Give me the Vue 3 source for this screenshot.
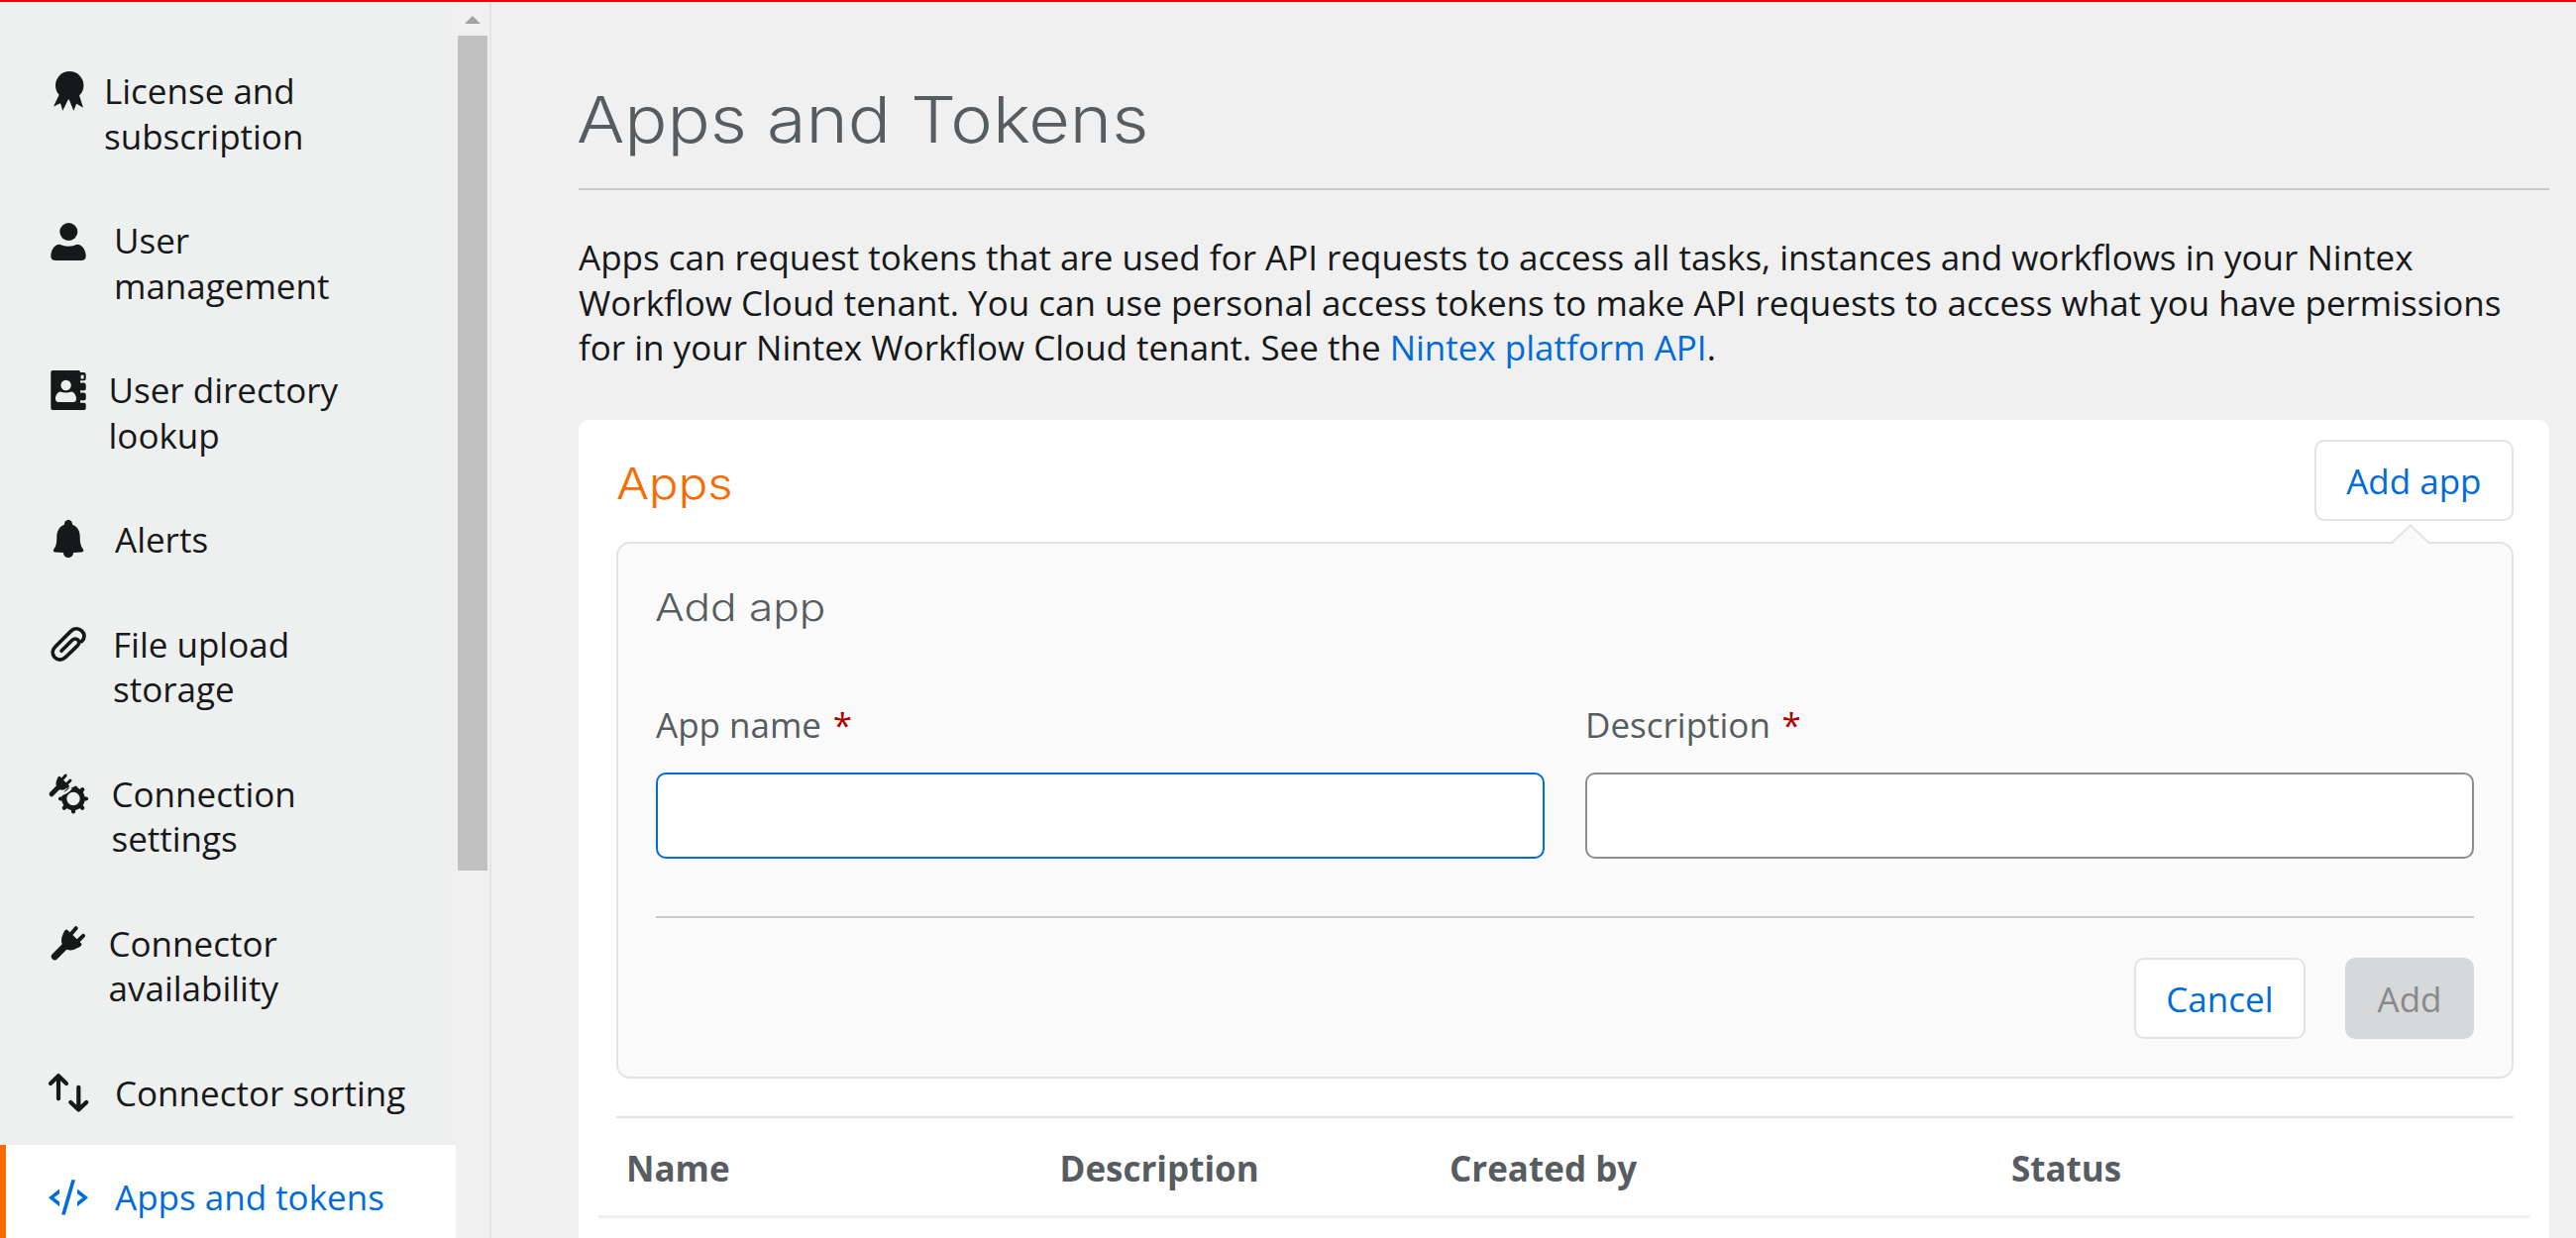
<script setup>
const navItems = [
  { icon: 'license', lines: ['License and', 'subscription'], indent: 105 },
  { icon: 'user', lines: ['User', 'management'], indent: 115 },
  { icon: 'directory', lines: ['User directory', 'lookup'], indent: 109.5 },
  { icon: 'bell', lines: ['Alerts'], indent: 116 },
  { icon: 'clip', lines: ['File upload', 'storage'], indent: 114 },
  { icon: 'plug-gear', lines: ['Connection', 'settings'], indent: 112.5 },
  { icon: 'plug', lines: ['Connector', 'availability'], indent: 109.5 },
  { icon: 'sort', lines: ['Connector sorting'], indent: 116 },
  { icon: 'code', lines: ['Apps and tokens'], indent: 116, active: true },
]

const columns = [
  { label: 'Name', width: 437.5 },
  { label: 'Description', width: 393.5 },
  { label: 'Created by', width: 567 },
  { label: 'Status', width: 400 },
]
</script>

<template>
  <div class="page">
    <aside class="sidebar">
      <nav class="nav">
        <a
          v-for="item in navItems"
          :key="item.icon"
          class="nav-item"
          :class="{ active: item.active }"
        >
          <svg class="nav-icon" viewBox="0 0 40 40" fill="currentColor">
            <template v-if="item.icon === 'license'">
              <circle cx="21.2" cy="17.2" r="14.2" />
              <path d="M11 26 5 38.5 12 35.3 14.3 42.7 20.3 30.5 25.3 42.7 28.2 35.8 35 39.7 30.6 26Z" />
            </template>
            <template v-else-if="item.icon === 'user'">
              <circle cx="20.3" cy="14" r="9" />
              <path d="M11 26.7Q20 30.6 29 26.7C34 26.7 37.7 33 37.7 38.5Q37.7 43 32.5 43H7.5Q2.3 43 2.3 38.5C2.3 33 6 26.7 11 26.7Z" />
            </template>
            <template v-else-if="item.icon === 'directory'">
              <path fill-rule="evenodd" d="M4.3 3H30.5Q32 3 32 5H36Q37.7 5.4 37.7 7V11.5Q37.7 13 36 13.2H32V15.6H36Q37.7 16 37.7 17.5V21.5Q37.7 23 36 23.2H32V25.6H36Q37.7 26 37.7 27.5V31.5Q37.7 33 36 33.2H32V35.7H36Q37.7 36 37.7 37.5V41Q37.7 43 35.7 43H4.3Q2.3 43 2.3 41V5Q2.3 3 4.3 3ZM32.6 7.7V11.6H35.6V7.7ZM17.6 12.8A5.2 5.2 0 1 0 17.6 23.2A5.2 5.2 0 1 0 17.6 12.8ZM12 24.5C9 24.5 7 28.5 7 31.5Q7 35 10.5 35H24.5Q28 35 28 31.5C28 28.5 26 24.5 23 24.5Q17.5 26.7 12 24.5Z" />
            </template>
            <template v-else-if="item.icon === 'bell'">
              <path d="M16 7.8C15.5 1.4 24.5 1.4 24 7.8C29 9.5 31.6 14 31.7 19.5C31.7 26 32.5 29.5 34.9 32.5Q36.2 35 33.5 35.4L25 36C25 42.7 15 42.7 15 36L6.5 35.4Q4 35 5.3 32.5C7.8 29.5 8.3 26 8.3 19.5C8.5 14 11 9.5 16 7.8Z" />
            </template>
            <template v-else-if="item.icon === 'clip'">
              <path class="stroke" stroke-width="3.7" d="M33.6 19.6C37 16 36.6 12 33.6 9.2C30.2 6 25.7 6.1 22.2 9.6L7 24.8C3.5 28.3 3.3 32.8 6.2 35.8C9.2 38.9 13.7 39 17.2 35.5L28.8 24.4C31.3 22 31.3 19.6 29.7 18.1C27.9 16.4 25.4 16.7 23.4 18.7L13 29.2" />
            </template>
            <template v-else-if="item.icon === 'plug-gear'">
              <g transform="translate(-1.1 -.8) scale(.66)">
                <path class="stroke" stroke-width="7.4" d="M6.3 35.8 18 24" />
                <path d="M18.7 8.5 33.5 23Q33 26 29.3 27Q24 31 18 28.5Q12 25 13.2 17Q14.5 13 15.5 11Q16 8.5 18.7 8.5Z" />
                <path class="stroke" stroke-width="4.4" d="M22.7 13 27.7 7.2M29.3 20.5 35 14.8" />
              </g>
              <circle class="stroke" cx="25" cy="27.5" r="9.2" stroke-width="5" />
              <path class="stroke" stroke-width="4.2" d="M36 27.5H38M32.6 19.9 34.2 18.3M32.6 35.1 34.2 36.7M25 38.5V40.5M17.4 35.1 15.8 36.7M14 27.5H12M26.5 17.5 27.3 16.8" />
              <path class="cut" d="M11 23.2Q18.5 22.5 23 16.2" />
            </template>
            <template v-else-if="item.icon === 'plug'">
              <path class="stroke" stroke-width="7" d="M6.3 35.8 18 24" />
              <path d="M18.7 8.5 33.5 23Q33 26 29.3 27Q24 31 18 28.5Q12 25 13.2 17Q14.5 13 15.5 11Q16 8.5 18.7 8.5Z" />
              <path class="stroke" stroke-width="4" d="M22.7 13 27.7 7.2M29.3 20.5 35 14.8" />
            </template>
            <template v-else-if="item.icon === 'sort'">
              <path class="stroke" stroke-width="4.2" d="M10 28.3V5.2M2 13 10 5.2 18 13M30.3 16.8V39.6M22.3 32 30.3 39.6 38.2 32" />
            </template>
            <template v-else>
              <path d="M11 14.6V19.3L5.5 23.3 11 27.4V32.2L0 23.3ZM29 14.6V19.3L34.5 23.3 29 27.4V32.2L40 23.3ZM23.3 5.2H27L16.8 40.6H13Z" />
            </template>
          </svg>
          <span class="nav-label" :style="{ marginLeft: item.indent - 89 + 'px' }">
            <span v-for="line in item.lines" :key="line" class="nav-line">{{ line }}</span>
          </span>
        </a>
      </nav>
      <div class="scrollbar">
        <svg class="scroll-up" viewBox="0 0 16 8"><path d="M0 8 8 0 16 8Z" /></svg>
        <div class="thumb"></div>
      </div>
    </aside>

    <main class="main">
      <h1 class="title"><span>Apps and Tokens</span></h1>
      <p class="intro">
        Apps can request tokens that are used for API requests to access all tasks, instances and workflows in your Nintex<br />
        Workflow Cloud tenant. You can use personal access tokens to make API requests to access what you have permissions<br />
        for in your Nintex Workflow Cloud tenant. See the <a class="link">Nintex platform API</a>.
      </p>

      <section class="card">
        <header class="card-head">
          <h2 class="card-title"><span>Apps</span></h2>
          <button class="btn">Add app</button>
        </header>

        <div class="panel">
          <svg class="pointer" viewBox="0 0 38 20">
            <path class="pointer-fill" d="M1 20 19 1 37 20Z" />
            <path class="pointer-line" d="M.5 18.5 19 1.5 37 18.5" />
          </svg>
          <h3 class="panel-title"><span>Add app</span></h3>
          <div class="fields">
            <label class="field">
              <span class="field-label">App name <b class="req">*</b></span>
              <input class="input focused" type="text" />
            </label>
            <label class="field">
              <span class="field-label">Description <b class="req">*</b></span>
              <input class="input" type="text" />
            </label>
          </div>
          <div class="actions">
            <button class="btn">Cancel</button>
            <button class="btn disabled">Add</button>
          </div>
        </div>

        <div class="table-head">
          <span
            v-for="col in columns"
            :key="col.label"
            class="col"
            :style="{ width: col.width + 'px' }"
          >{{ col.label }}</span>
        </div>
        <div class="row-line"></div>
      </section>
    </main>
  </div>
</template>

<style>
body {
  margin: 0;
  overflow: hidden;
}
</style>

<style scoped>
* {
  box-sizing: border-box;
}
.page {
  display: flex;
  width: 2600px;
  height: 1250px;
  overflow: hidden;
  border-top: 2px solid #e80000;
  background: #f0f0f0;
  color: #161819;
  font: 400 35px/45.5px "Open Sans", sans-serif;
}
.sidebar {
  display: flex;
  flex: none;
  width: 496px;
  border-right: 2px solid #e3e4e4;
}
.nav {
  width: 460px;
  padding-top: 37px;
  background: #eef0ef;
}
.nav-item {
  display: flex;
  align-items: flex-start;
  padding: 30px 0 30px 49px;
}
.nav-item.active {
  padding-left: 43px;
  border-left: 6px solid #f96b00;
  background: #fff;
  color: #006bdb;
}
.nav-icon {
  flex: none;
  width: 40px;
  height: 40px;
  overflow: visible;
}
.stroke {
  fill: none;
  stroke: currentColor;
  stroke-linecap: round;
  stroke-linejoin: round;
}
.cut {
  fill: none;
  stroke: #eef0ef;
  stroke-width: 2.4;
}
.nav-line {
  display: block;
  white-space: nowrap;
}
.scrollbar {
  display: flex;
  flex-direction: column;
  align-items: center;
  width: 34px;
  background: #f0f0f0;
}
.scroll-up {
  width: 16px;
  height: 8px;
  margin-top: 14px;
  fill: #a3a3a3;
}
.thumb {
  width: 30px;
  height: 843px;
  margin-top: 12px;
  background: #c1c1c1;
}
.main {
  flex: 1;
  padding: 78px 27px 0 88px;
}
h1,
h2,
h3,
p {
  margin: 0;
}
.title,
.card-title,
.panel-title {
  color: #565c60;
  font-family: Inter, sans-serif;
  font-weight: 350;
  white-space: nowrap;
}
.title span,
.card-title span,
.panel-title span {
  display: inline-block;
  transform-origin: 0 50%;
}
.title span {
  margin-left: -2px;
  transform: scaleX(1.105);
}
.card-title span {
  transform: scaleX(1.13);
}
.panel-title span {
  margin-left: -1.5px;
  transform: scaleX(1.145);
}
.title {
  height: 112px;
  border-bottom: 2px solid #c9caca;
  font-size: 65px;
  line-height: 82px;
}
.intro {
  margin-top: 45px;
  white-space: nowrap;
}
.link {
  color: #006bdb;
}
.card {
  height: 900px;
  margin-top: 50.5px;
  padding: 20px 36px 0 38px;
  border-radius: 10px;
  background: #fff;
}
.card-head {
  display: flex;
  align-items: center;
  justify-content: space-between;
  height: 82px;
}
.card-title {
  padding-top: 6px;
  color: #f96b00;
  font-size: 43.5px;
  line-height: 50px;
}
.btn {
  height: 82px;
  padding: 1px 30.5px 0;
  border: 2px solid #e2e3e3;
  border-radius: 10px;
  background: #fff;
  color: #006bdb;
  font: inherit;
}
.btn.disabled {
  border-color: #d7d8da;
  background: #d7d8da;
  color: #87898b;
}
.panel {
  position: relative;
  height: 542px;
  margin-top: 21px;
  padding: 39px 38px 0;
  border: 2px solid #e2e3e3;
  border-radius: 14px;
  background: #fafafa;
}
.pointer {
  position: absolute;
  top: -20px;
  right: 83px;
  width: 38px;
  height: 20px;
}
.pointer-fill {
  fill: #fafafa;
}
.pointer-line {
  fill: none;
  stroke: #e2e3e3;
  stroke-width: 2;
}
.panel-title {
  font-size: 38.5px;
  line-height: 50px;
}
.fields {
  display: flex;
  gap: 41px;
  margin-top: 70.7px;
  padding-bottom: 58px;
  border-bottom: 2px solid #c9caca;
}
.field {
  flex: 1;
}
.field:first-child {
  flex: 0 0 897px;
}
.field-label {
  display: block;
  color: #565c60;
}
.req {
  margin-left: 2.5px;
  color: #b00000;
  font-weight: 400;
}
.input {
  display: block;
  width: 100%;
  height: 87px;
  margin-top: 25.8px;
  border: 2px solid #8a8e93;
  border-radius: 10px;
  background: #fff;
  outline: none;
}
.input.focused {
  border-color: #006bdb;
}
.actions {
  display: flex;
  justify-content: flex-end;
  gap: 40px;
  margin-top: 40px;
}
.table-head {
  display: flex;
  margin-top: 38px;
  padding: 28px 0 24.5px 10px;
  border-top: 2px solid #e2e3e3;
  color: #565c60;
  font-weight: 700;
}
.col {
  flex: none;
}
.row-line {
  height: 3px;
  margin: 0 -17px 0 -18px;
  background: #f0f0f0;
}
</style>
